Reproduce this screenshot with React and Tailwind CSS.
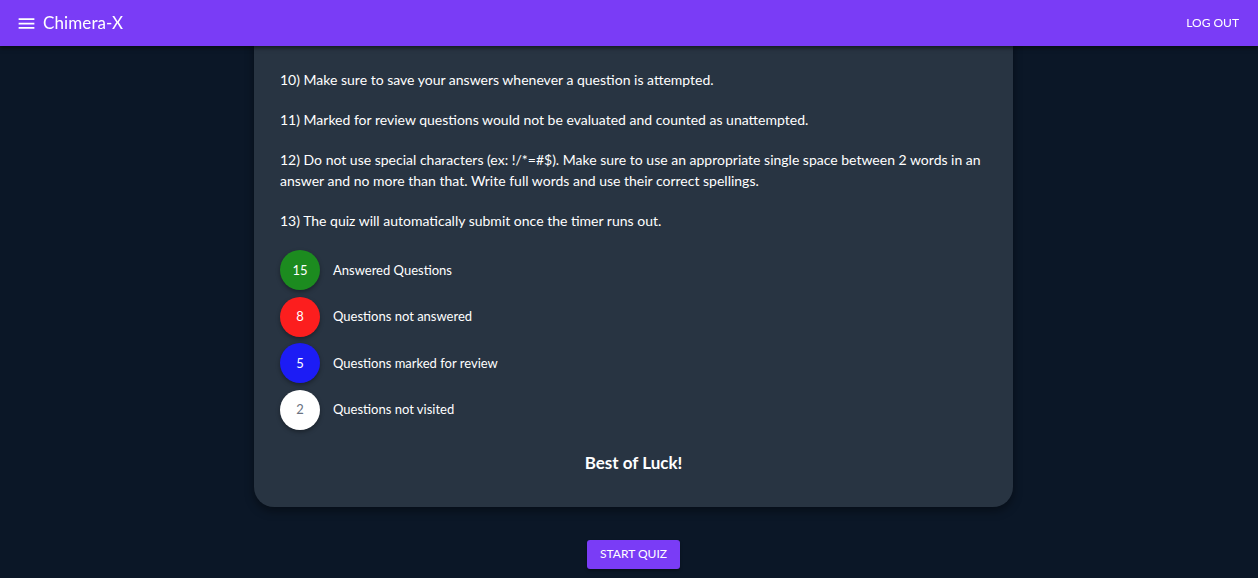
import React from 'react';

const legend = [
    { count: 15, label: 'Answered Questions', color: 'bg-[#1c8b1f] text-white' },
    { count: 8, label: 'Questions not answered', color: 'bg-[#fc1e1e] text-white' },
    { count: 5, label: 'Questions marked for review', color: 'bg-[#1c1cf5] text-white' },
    { count: 2, label: 'Questions not visited', color: 'bg-white text-gray-500' },
];

function App() {
    return (
        <div className="min-h-screen bg-[#0b1727] font-['Lato',sans-serif] text-white overflow-hidden h-[578px]">
            {/* App bar */}
            <header className="fixed top-0 inset-x-0 z-10 h-[46px] bg-[#7a3cf6] flex items-center justify-between pl-[16px] pr-[19px] shadow-[0_2px_4px_rgba(0,0,0,0.5)]">
                <div className="flex items-center gap-[6px]">
                    <svg className="w-[21px] h-[21px]" viewBox="0 0 24 24" fill="currentColor">
                        <path d="M3 18h18v-2H3v2zm0-5h18v-2H3v2zm0-7v2h18V6H3z" />
                    </svg>
                    <span className="text-[17px] tracking-[0.1px]">Chimera-X</span>
                </div>
                <button className="text-[12px] uppercase">Log out</button>
            </header>

            <main className="flex flex-col items-center pl-[9px]">
                <div className="w-[759px] bg-[#283442] rounded-b-[20px] shadow-[0_4px_10px_rgba(0,0,0,0.4)] pt-[69px] pb-[34px] pl-[26px] pr-[26px] text-[14px] leading-[21px]">
                    <p className="mb-[19px]">10) Make sure to save your answers whenever a question is attempted.</p>
                    <p className="mb-[19px]">11) Marked for review questions would not be evaluated and counted as unattempted.</p>
                    <p className="mb-[19px]">12) Do not use special characters (ex: !/*=#$). Make sure to use an appropriate single space between 2 words in an answer and no more than that. Write full words and use their correct spellings.</p>
                    <p className="mb-[19px]">13) The quiz will automatically submit once the timer runs out.</p>

                    <div className="flex flex-col gap-[6.67px]">
                        {legend.map(item => (
                            <div key={item.label} className="flex items-center gap-[13px]">
                                <div className={`w-[40px] h-[40px] rounded-full flex items-center justify-center text-[13px] shadow-[0_2px_4px_rgba(0,0,0,0.35)] ${item.color}`}>
                                    {item.count}
                                </div>
                                <span className="text-[13px]">{item.label}</span>
                            </div>
                        ))}
                    </div>

                    <h3 className="text-center font-bold text-[17px] mt-[22px]">Best of Luck!</h3>
                </div>

                <button className="mt-[33px] bg-[#7a3cf6] rounded-[3px] px-[13px] h-[29px] text-[12px] uppercase shadow-[0_2px_3px_rgba(0,0,0,0.3)]">
                    Start Quiz
                </button>
            </main>
        </div>
    );
}

export default App;
